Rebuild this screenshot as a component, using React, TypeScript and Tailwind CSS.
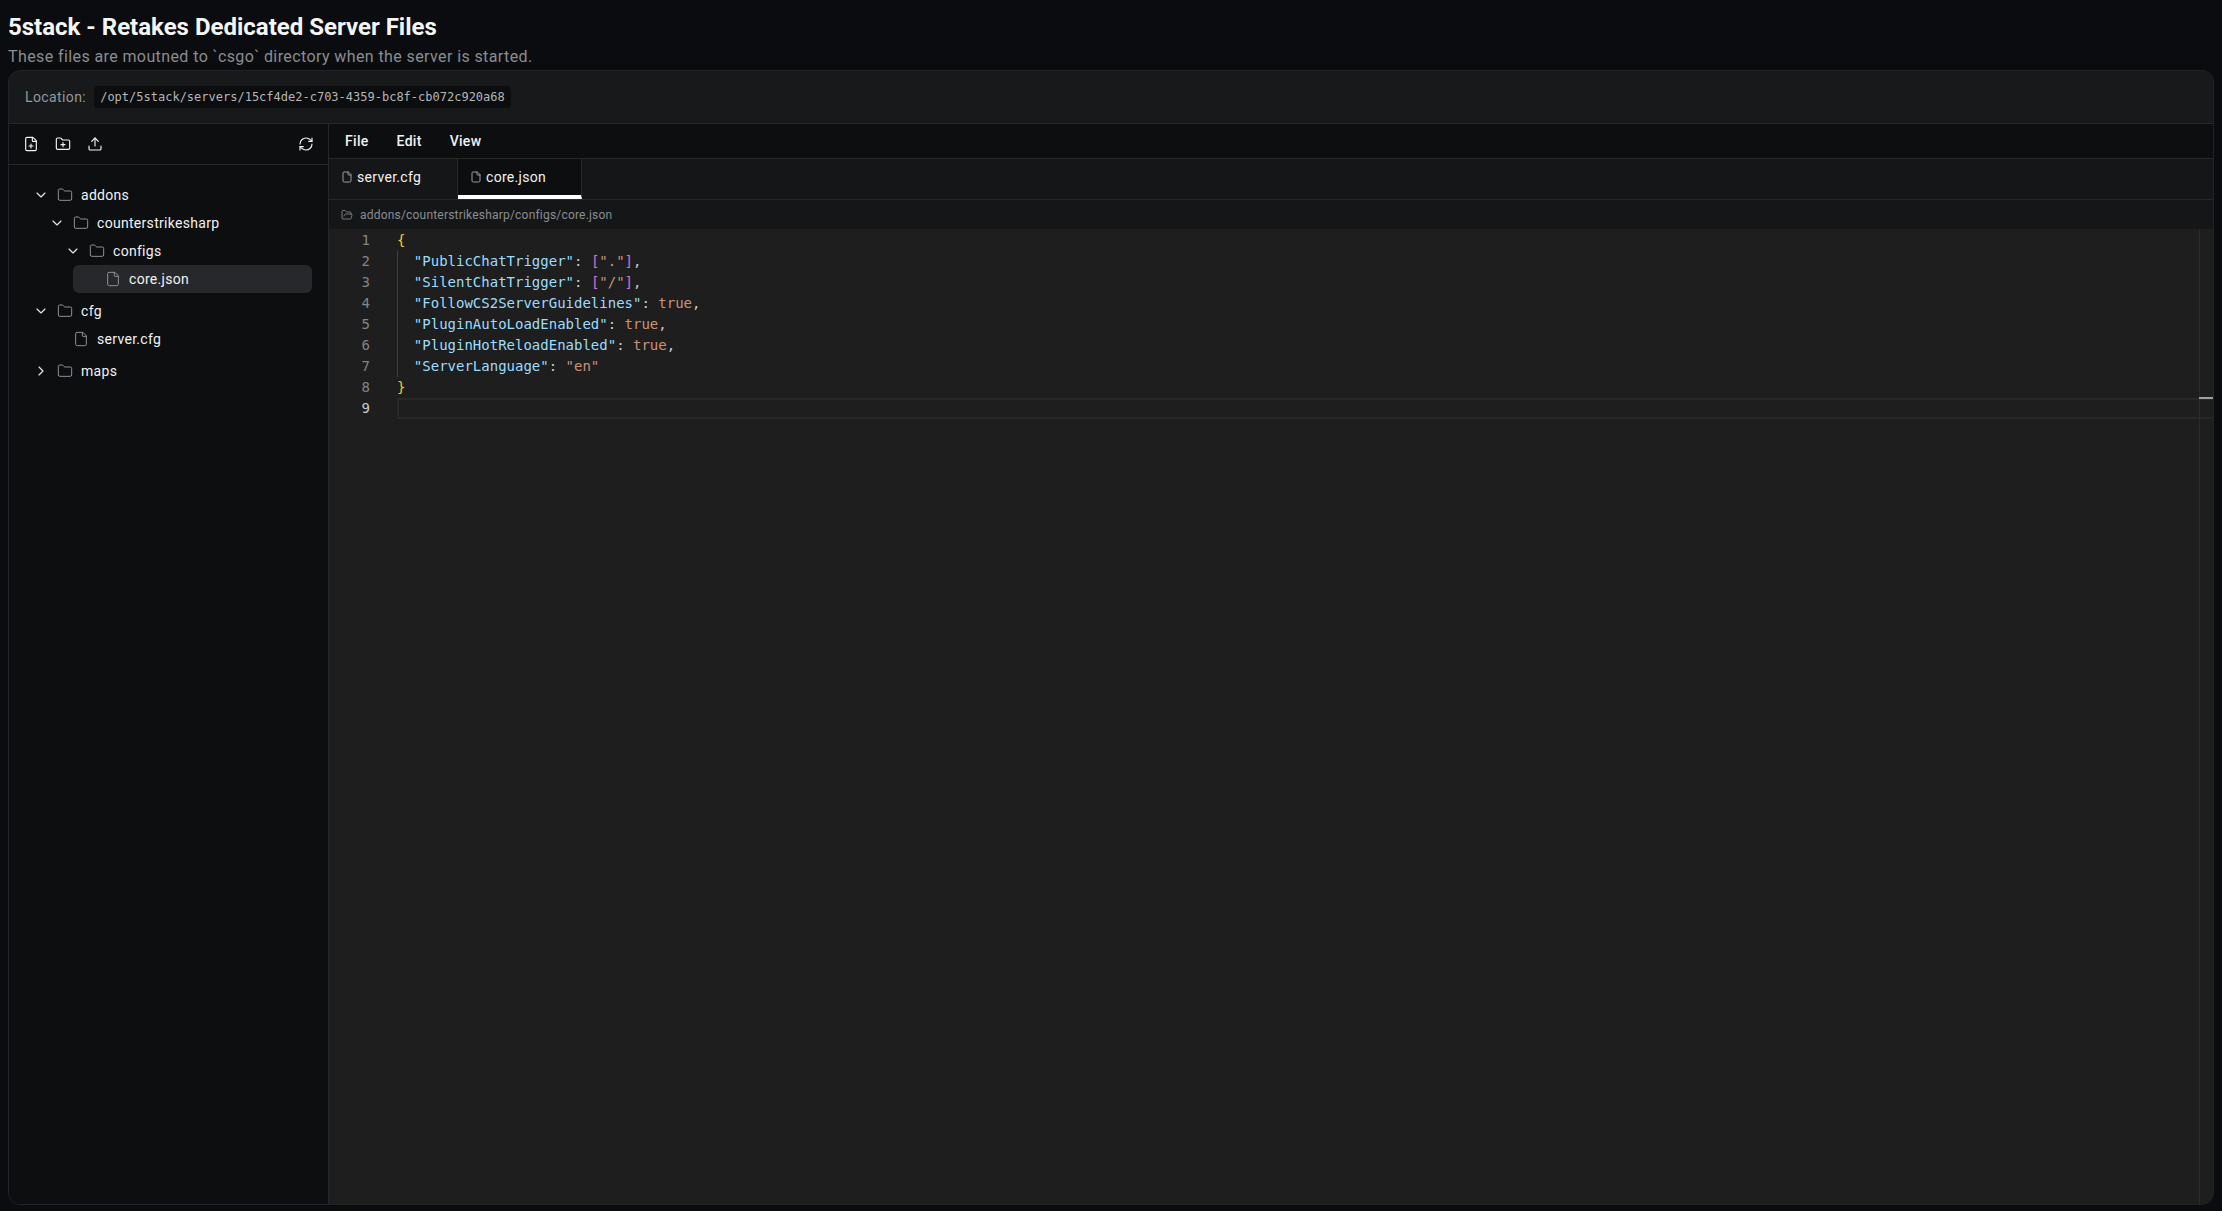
import React from "react";
import {
  ChevronDown,
  ChevronRight,
  File,
  FilePlus,
  Folder,
  FolderOpen,
  FolderPlus,
  RefreshCw,
  Upload,
} from "lucide-react";

const tree = [
  { name: "addons", depth: 0, kind: "open" },
  { name: "counterstrikesharp", depth: 1, kind: "open" },
  { name: "configs", depth: 2, kind: "open" },
  { name: "core.json", depth: 3, kind: "file", selected: true },
  { name: "cfg", depth: 0, kind: "open", gap: true },
  { name: "server.cfg", depth: 1, kind: "file" },
  { name: "maps", depth: 0, kind: "closed", gap: true },
];

const Key = ({ children }: { children: string }) => <span className="text-[#9cdcfe]">{children}</span>;
const Str = ({ children }: { children: string }) => <span className="text-[#ce9178]">{children}</span>;
const Punct = ({ children }: { children: string }) => <span className="text-[#cccccc]">{children}</span>;
const Arr = ({ children }: { children: string }) => <span className="text-[#da70d6]">{children}</span>;

const lines: React.ReactNode[] = [
  <span className="text-[#f6c938]">{"{"}</span>,
  <><Key>{'  "PublicChatTrigger"'}</Key><Punct>: </Punct><Arr>[</Arr><Str>{'"."'}</Str><Arr>]</Arr><Punct>,</Punct></>,
  <><Key>{'  "SilentChatTrigger"'}</Key><Punct>: </Punct><Arr>[</Arr><Str>{'"/"'}</Str><Arr>]</Arr><Punct>,</Punct></>,
  <><Key>{'  "FollowCS2ServerGuidelines"'}</Key><Punct>: </Punct><Str>true</Str><Punct>,</Punct></>,
  <><Key>{'  "PluginAutoLoadEnabled"'}</Key><Punct>: </Punct><Str>true</Str><Punct>,</Punct></>,
  <><Key>{'  "PluginHotReloadEnabled"'}</Key><Punct>: </Punct><Str>true</Str><Punct>,</Punct></>,
  <><Key>{'  "ServerLanguage"'}</Key><Punct>: </Punct><Str>{'"en"'}</Str></>,
  <span className="text-[#f6c938]">{"}"}</span>,
  "",
];

const depthPadding = ["pl-[24px]", "pl-[40px]", "pl-[56px]", "pl-[72px]"];

function TreeRow({ row }: { row: (typeof tree)[number] }) {
  const isFile = row.kind === "file";
  return (
    <div className={`flex h-[28px] items-center ${row.gap ? "mt-[4px]" : ""} ${row.selected ? "ml-[64px] mr-[16px] rounded-md bg-[#27282b] pl-[32px]" : depthPadding[row.depth]}`}>
      {!isFile && (
        row.kind === "open"
          ? <ChevronDown className="size-4 text-[#e5e5e5]" strokeWidth={1.75} />
          : <ChevronRight className="size-4 text-[#e5e5e5]" strokeWidth={1.75} />
      )}
      {isFile ? (
        <File className={`size-4 text-[#8f9194] ${row.selected ? "" : "ml-[24px]"}`} strokeWidth={1.5} />
      ) : (
        <Folder className="ml-[8px] size-4 text-[#8f9194]" strokeWidth={1.5} />
      )}
      <span className="ml-[8px] text-[14px] tracking-[0.3px] text-[#f2f2f2]">{row.name}</span>
    </div>
  );
}

export default function App() {
  return (
    <div className="flex h-screen flex-col overflow-hidden bg-[#0a0c0f] px-[8px] pb-[6px] font-['Roboto',sans-serif]">
      <h1 className="mt-[11px] text-[24px] leading-[32px] font-bold text-[#f5f5f5]">5stack - Retakes Dedicated Server Files</h1>
      <p className="mt-[2px] text-[16px] leading-[24px] tracking-[0.4px] text-[#8b8d90]">These files are moutned to `csgo` directory when the server is started.</p>

      <div className="mt-[1px] flex min-h-0 flex-1 flex-col overflow-hidden rounded-xl border border-[#212325] bg-[#17191b]">
        <div className="flex h-[53px] shrink-0 items-center gap-[8px] border-b border-[#26282a] px-[16px]">
          <span className="text-[14px] tracking-[0.4px] text-[#96989b]">Location:</span>
          <code className="rounded bg-[#0b0d0f] px-[6px] py-[2px] font-['DejaVu_Sans_Mono',monospace] text-[12px] leading-[18px] text-[#b4b6b8]">/opt/5stack/servers/15cf4de2-c703-4359-bc8f-cb072c920a68</code>
        </div>

        <div className="flex min-h-0 flex-1">
          <aside className="w-[320px] shrink-0 border-r border-[#26282a] bg-[#0c0e10]">
            <div className="flex h-[41px] items-center justify-between border-b border-[#26282a] px-[14px]">
              <div className="flex items-center gap-[16px]">
                <FilePlus className="size-4 text-[#f2f2f2]" strokeWidth={1.75} />
                <FolderPlus className="size-4 text-[#f2f2f2]" strokeWidth={1.75} />
                <Upload className="size-4 text-[#f2f2f2]" strokeWidth={1.75} />
              </div>
              <RefreshCw className="size-4 text-[#f2f2f2]" strokeWidth={1.75} />
            </div>
            <div className="pt-[16px]">
              {tree.map((row) => <TreeRow key={row.name} row={row} />)}
            </div>
          </aside>

          <main className="flex min-w-0 flex-1 flex-col">
            <div className="flex h-[35px] shrink-0 items-center gap-[28px] border-b border-[#26282a] bg-[#0c0e10] px-[16px] text-[14px] font-medium tracking-[0.3px] text-[#f2f2f2]">
              <span>File</span>
              <span>Edit</span>
              <span>View</span>
            </div>
            <div className="flex h-[41px] shrink-0 border-b border-[#26282a] bg-[#141618] text-[14px] tracking-[0.3px] text-[#f2f2f2]">
              <div className="flex w-[129px] items-center gap-[4px] border-r border-b-[4px] border-r-[#26282a] border-b-transparent pl-[12px]">
                <File className="size-[12px] text-[#9a9c9f]" strokeWidth={2} />
                <span>server.cfg</span>
              </div>
              <div className="flex w-[124px] items-center gap-[4px] border-r border-b-[4px] border-r-[#26282a] border-b-white bg-[#0c0e10] pl-[12px]">
                <File className="size-[12px] text-[#9a9c9f]" strokeWidth={2} />
                <span>core.json</span>
              </div>
            </div>
            <div className="flex h-[29px] shrink-0 items-center gap-[7px] bg-[#141618] pl-[12px] text-[12px] tracking-[0.2px] text-[#8b8d90]">
              <FolderOpen className="size-[12px] text-[#85878a]" strokeWidth={1.75} />
              <span>addons/counterstrikesharp/configs/core.json</span>
            </div>

            <div className="relative min-h-0 flex-1 bg-[#1e1e1e] pt-[1px] font-['DejaVu_Sans_Mono',monospace] text-[14px] leading-[21px]">
              {lines.map((line, i) => (
                <div key={i} className="flex h-[21px]">
                  <span className={`w-[41px] shrink-0 text-right ${i === 8 ? "text-[#cccccc]" : "text-[#858585]"}`}>{i + 1}</span>
                  <span className={`ml-[27px] flex-1 whitespace-pre ${i === 8 ? "border-y-2 border-l-2 border-[#282828] leading-[17px]" : ""}`}>{line}</span>
                </div>
              ))}
              {/* indent guide and overview ruler sit over the text */}
              <div className="absolute top-[22px] left-[68px] h-[126px] w-px bg-[#404040]" />
              <div className="absolute top-0 right-0 bottom-0 w-[14px] border-l border-[#2b2b2b]" />
              <div className="absolute top-[168px] right-0 h-[2px] w-[14px] bg-[#a0a0a0]" />
            </div>
          </main>
        </div>
      </div>
    </div>
  );
}
